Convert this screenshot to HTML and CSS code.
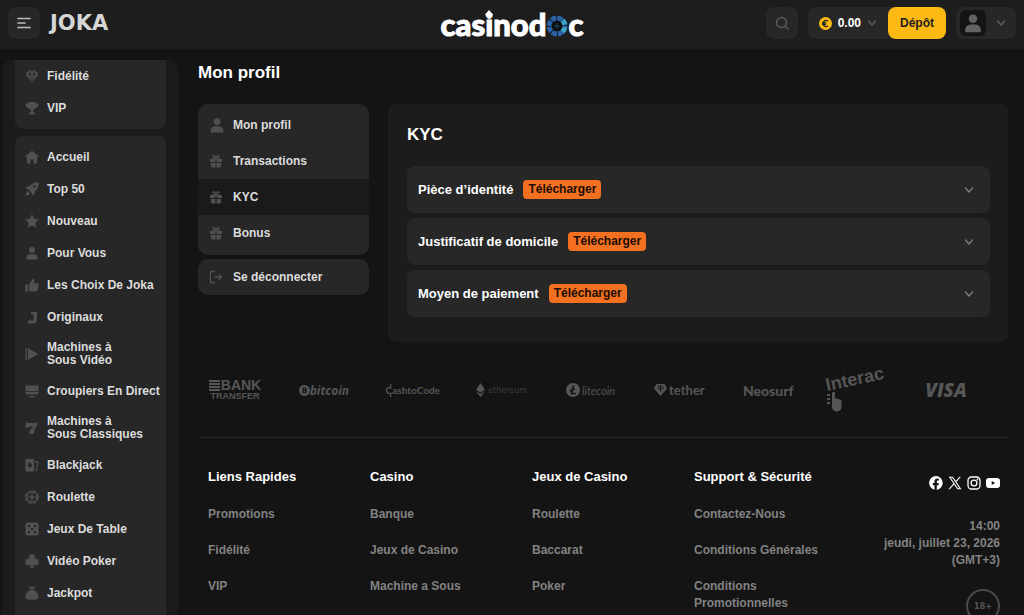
FILE: index.html
```html
<!DOCTYPE html>
<html lang="fr">

<head>
    <meta charset="UTF-8">
    <meta name="viewport" content="width=device-width, initial-scale=1.0">
    <title>Mon profil</title>
    <link rel="stylesheet" href="styles.css">
</head>

<body>
    <!-- shared icons -->
    <svg class="sprite" aria-hidden="true">
        <symbol id="i-chevron" viewBox="0 0 10 10"><path d="M1.500 3l3.500 4 3.500-4" fill="none" stroke="currentColor" stroke-width="1.400" stroke-linecap="round" stroke-linejoin="round"/></symbol>
        <symbol id="i-user" viewBox="0 0 14 14"><circle cx="7" cy="4" r="3"/><path d="M1.500 13.500v-1.500C1.500 9.500 3.500 8 5.500 8h3c2 0 4 1.500 4 4v1.500z"/></symbol>
        <symbol id="i-gift" viewBox="0 0 14 14"><path d="M1 5h5.500v3H1zM7.500 5H13v3H7.500zM2 9h4.500v4.500H3a1 1 0 0 1-1-1zM7.500 9H12v3.500a1 1 0 0 1-1 1H7.500z"/><path d="M6.800 4.800C5 4.800 3.300 4 3.800 2.500 4.300 1 6.500 1.500 6.800 4.800c.6-3.300 2.800-3.800 3.400-2.300.5 1.500-1.400 2.300-3.400 2.300z" fill="none" stroke="currentColor" stroke-width="1.200"/></symbol>
    </svg>

    <header class="header">
        <div class="header-left">
            <button class="icon-btn" aria-label="Menu">
                <svg width="16" height="16" viewBox="0 0 16 16" fill="none" stroke="#bdbdbd" stroke-width="1.700" stroke-linecap="round"><path d="M2 3.500h12M2 8h7M2 12.500h12"/></svg>
            </button>
            <a href="#" class="brand">JOKA</a>
        </div>
        <a href="#" class="casinodoc">cas<span class="dot-i">i<svg class="diamond" width="8" height="9" viewBox="0 0 8 9"><path d="M4 0l4 4.500L4 9 0 4.500z" fill="#fff"/></svg></span>nod<svg class="chip" width="22" height="22" viewBox="0 0 22 22" fill="none">
                <circle cx="11" cy="11" r="11" fill="#14181c"/>
                <circle cx="11" cy="11" r="8" stroke="#2a62a5" stroke-width="5" stroke-dasharray="5.300 .983"/>
                <path d="M16.500 5.200a8 8 0 0 1 2.300 4.300M18.900 12.300a8 8 0 0 1-2.400 4.500" stroke="#3fa3c4" stroke-width="5"/>
                <circle cx="11" cy="11" r="5" fill="#0b0f12"/>
                <path d="M11 8v6M8 11h6" stroke="#24445c" stroke-width="1"/>
            </svg>c</a>
        <div class="header-right">
            <button class="icon-btn" aria-label="Rechercher">
                <svg width="14" height="14" viewBox="0 0 14 14" fill="none" stroke="#5a5a5a" stroke-width="1.500" stroke-linecap="round"><circle cx="6.500" cy="6.500" r="5"/><path d="M10.500 10.500l2.500 2.500"/></svg>
            </button>
            <div class="wallet">
                <button class="balance">
                    <svg width="13" height="13" viewBox="0 0 13 13"><circle cx="6.500" cy="6.500" r="6.500" fill="#fcb813"/><path d="M9 4.200A3 3 0 1 0 9 8.800M3 5.800h4.200M3 7.300h4" fill="none" stroke="#222" stroke-width="1.300"/></svg>
                    0.00
                    <svg class="chevron" width="10" height="10"><use href="#i-chevron"/></svg>
                </button>
                <button class="deposit">Dépôt</button>
            </div>
            <button class="account" aria-label="Mon compte">
                <span class="avatar"><svg width="20" height="20"><use href="#i-user"/></svg></span>
                <svg class="chevron" width="10" height="10"><use href="#i-chevron"/></svg>
            </button>
        </div>
    </header>

    <div class="layout">
        <nav class="sidebar">
            <div class="side-card side-card-top">
                <a href="#"><svg viewBox="0 0 14 14"><path d="M3.300 1.500h7.400L13.800 5.300 7 13.500.2 5.300z"/><path d="M.5 5.300h13M3.500 2l1.200 3.300L7 13l2.300-7.700L10.500 2M4.700 5.300L7 1.500l2.300 3.800" fill="none" stroke="#272727" stroke-width=".7"/></svg>Fidélité</a>
                <a href="#"><svg viewBox="0 0 14 14"><path d="M3.500 1h7v1.500H13.500c0 3-1.300 4.500-3.500 5L8 9.300v2h2V13.500H4v-2.200h2v-2L4 7.500C1.800 7 .5 5.500.5 2.500h3z"/></svg>VIP</a>
            </div>
            <div class="side-card side-card-main">
                <a href="#"><svg viewBox="0 0 14 14"><path d="M7 .8l6.600 5.500-.7 1-.9-.6v6.800H8.500V9.500h-3v4H2V6.700l-.9.600-.7-1z"/></svg>Accueil</a>
                <a href="#"><svg viewBox="0 0 14 14"><path fill-rule="evenodd" d="M13.600.4c.4 4-1 6.700-3.300 8.400l-.5 2.700-2.500 2-.9-2.800-3.100-3.100L.5 6.700l2-2.500 2.700-.5C7 1.400 9.600 0 13.600.4zM9.500 3.300a1.200 1.200 0 1 0 .01 0z"/><path d="M2.600 9l2.400 2.400-1.400 1.500-2.800.4.400-2.800z"/></svg>Top 50</a>
                <a href="#"><svg viewBox="0 0 14 14"><path d="M7 0l2.100 4.700 4.900.6-3.600 3.500.9 5L7 11.400l-4.300 2.400.9-5L0 5.300l4.900-.6z"/></svg>Nouveau</a>
                <a href="#"><svg viewBox="0 0 14 14"><use href="#i-user"/></svg>Pour Vous</a>
                <a href="#"><svg viewBox="0 0 14 14"><path d="M.3 6.500H3v7H.3zM4 6.500L7.800.8c1.300-.3 2 .5 1.700 1.700L8.800 5.300h4.400c.7.500.8 1.200.6 2l-1.300 5c-.3.800-.8 1.200-1.700 1.200H5.500L4 12.800z"/></svg>Les Choix De Joka</a>
                <a href="#"><svg viewBox="0 0 14 14"><path d="M6 2h6v7.500c0 2.500-1.300 4-4 4H3v-3h4c1 0 1.500-.5 1.500-1.500V4.500H6z"/></svg>Originaux</a>
                <a href="#"><svg viewBox="0 0 14 14"><path d="M.5 1h1.300v12H.5zM3 1l10 6-10 6z"/></svg>Machines à<br>Sous Vidéo</a>
                <a href="#"><svg viewBox="0 0 14 14"><path d="M.5 1.500h13v5.700H.5zM.5 8h13v2.500H.5zM4 12h6v1.300H4z"/></svg>Croupiers En Direct</a>
                <a href="#"><svg viewBox="0 0 14 14"><path d="M.8 1.300l2 .6c2 .7 3.400-.8 5.200 0 1.600.5 2.600.2 4.500-.9v3C10.300 6.500 9 9.300 8.700 13H4.300C4.600 9.900 6 7.600 8 5.500 6 5.800 4 5 3 6.600l-2.200.6z"/></svg>Machines à<br>Sous Classiques</a>
                <a href="#"><svg viewBox="0 0 14 14"><path fill-rule="evenodd" d="M1.500 1H8a1 1 0 0 1 1 1v10.500a1 1 0 0 1-1 1H1.500a1 1 0 0 1-1-1V2a1 1 0 0 1 1-1zM4.800 4C4 5.200 2.600 6 2.600 7.500c0 1 .8 1.500 1.700 1l-.3 1.300h1.600l-.3-1.300c.9.500 1.700 0 1.700-1C7 6 5.600 5.200 4.800 4z"/><path d="M10 2.500l2.800.9c.6.200.9.700.8 1.200L12 12.300c-.1.600-.5.900-1 .8l-1-.2v-1.600l1-.1 1.300-6.100L10 4.500z"/></svg>Blackjack</a>
                <a href="#"><svg viewBox="0 0 14 14"><circle cx="7" cy="7" r="6" fill="none" stroke="currentColor" stroke-width="1.700" stroke-dasharray="3.700 1"/><circle cx="7" cy="7" r="4.700" fill="none" stroke="currentColor" stroke-width=".8"/><circle cx="7" cy="7" r="1.800"/><path d="M7 3v8M3 7h8" stroke="currentColor" stroke-width="1"/></svg>Roulette</a>
                <a href="#"><svg viewBox="0 0 14 14"><rect x=".5" y=".5" width="13" height="13" rx="2.500"/><g fill="#272727"><circle cx="4" cy="4" r="1.200"/><circle cx="10" cy="4" r="1.200"/><circle cx="7" cy="7" r="1.200"/><circle cx="4" cy="10" r="1.200"/><circle cx="10" cy="10" r="1.200"/></g></svg>Jeux De Table</a>
                <a href="#"><svg viewBox="0 0 14 14"><circle cx="7" cy="3.500" r="3.200"/><circle cx="3.500" cy="8" r="3.200"/><circle cx="10.500" cy="8" r="3.200"/><path d="M6 5h2v5l1.300 3.700H4.700L6 10z"/></svg>Vidéo Poker</a>
                <a href="#"><svg viewBox="0 0 14 14"><path d="M4 .8h6L9 3H5zM5 4h4c3 2 4.700 4.500 4.700 6.500 0 2-1.500 3.200-3.700 3.200H4c-2.200 0-3.700-1.200-3.700-3.200C.3 8.500 2 6 5 4z"/></svg>Jackpot</a>
            </div>
        </nav>

        <main class="main">
            <h1>Mon profil</h1>
            <div class="profile">
                <div class="profile-nav">
                    <nav class="menu-card">
                        <a href="#"><svg class="menu-user" viewBox="0 0 14 14"><use href="#i-user"/></svg>Mon profil</a>
                        <a href="#"><svg viewBox="0 0 14 14"><use href="#i-gift"/></svg>Transactions</a>
                        <a href="#" class="active"><svg viewBox="0 0 14 14"><use href="#i-gift"/></svg>KYC</a>
                        <a href="#"><svg viewBox="0 0 14 14"><use href="#i-gift"/></svg>Bonus</a>
                    </nav>
                    <button class="logout">
                        <svg viewBox="0 0 14 14"><path d="M6 1.500H1.500v11H6M5 7h7.500M9.800 4.300L12.500 7 9.800 9.700" fill="none" stroke="currentColor" stroke-width="1.300"/></svg>
                        Se déconnecter
                    </button>
                </div>

                <section class="panel">
                    <h2>KYC</h2>
                    <div class="doc-row">
                        <span>Pièce d’identité</span>
                        <button class="upload">Télécharger</button>
                        <button class="toggle" aria-label="Ouvrir Pièce d’identité"><svg width="10" height="10"><use href="#i-chevron"/></svg></button>
                    </div>
                    <div class="doc-row">
                        <span>Justificatif de domicile</span>
                        <button class="upload">Télécharger</button>
                        <button class="toggle" aria-label="Ouvrir Justificatif de domicile"><svg width="10" height="10"><use href="#i-chevron"/></svg></button>
                    </div>
                    <div class="doc-row">
                        <span>Moyen de paiement</span>
                        <button class="upload">Télécharger</button>
                        <button class="toggle" aria-label="Ouvrir Moyen de paiement"><svg width="10" height="10"><use href="#i-chevron"/></svg></button>
                    </div>
                </section>
            </div>

            <div class="payments">
                <div class="pay bank">
                    <span class="bank-top"><svg width="11" height="11" viewBox="0 0 11 11"><path d="M0 0h11v2H0zM0 3h11v2H0zM0 6h11v2H0zM0 9h11v2H0z"/></svg>BANK</span>
                    <span class="bank-bottom">TRANSFER</span>
                </div>
                <div class="pay bitcoin"><svg width="11" height="11" viewBox="0 0 11 11"><path fill-rule="evenodd" d="M5.500 0a5.500 5.500 0 1 0 .01 0zM3.800 2.500h2.400c1.800 0 2 2 .9 2.700C8.500 6 8 8.300 6 8.300H3.300zM5 3.600l-.2 1.200h1c.9 0 1-1.200.2-1.200zM4.700 6l-.2 1.200h1.200c1 0 1-1.200.1-1.200z"/></svg>bitcoin</div>
                <div class="pay cashto">CashtoCode<svg class="cash-bar" width="3" height="13" viewBox="0 0 3 13"><path d="M1 0h1.200v3H1zM1 10h1.200v3H1z"/></svg></div>
                <div class="pay ethereum"><svg width="9" height="14" viewBox="0 0 9 14"><path d="M4.500 0L9 7 4.500 9.500 0 7zM0 8.200l4.500 2.500L9 8.200 4.500 14z"/></svg>ethereum</div>
                <div class="pay litecoin"><svg width="14" height="14" viewBox="0 0 14 14"><circle cx="7" cy="7" r="7"/><path d="M7.600 2.500L5.500 10.500h4.500M3.800 8l5-2" fill="none" stroke="#141414" stroke-width="1.600"/></svg>litecoin</div>
                <div class="pay tether"><svg width="13" height="12" viewBox="0 0 13 12"><path d="M2.500 0h8L13 4.500 6.500 12 0 4.500z"/><path d="M3.500 2h6M6.500 2v6M3.500 4.500c0 1 6 1 6 0s-6-1-6 0z" fill="none" stroke="#141414" stroke-width=".8"/></svg>tether</div>
                <div class="pay neosurf">Neosurf</div>
                <div class="pay interac">
                    <svg width="62" height="48" viewBox="0 0 62 48">
                        <text x="1" y="25" transform="rotate(-12 1 25)">Interac</text>
                        <path d="M1 28h3v2H1zM1 32h3v2H1zM1 36h3v2H1z"/>
                        <path d="M6 27c0-1.300 3-1.300 3 0v5l5 1.500c1 .4 1.500 1 1.500 2V41c0 2.500-2 4.500-4.500 4.500S6 43.500 6 41z"/>
                    </svg>
                </div>
                <div class="pay visa">VISA</div>
            </div>

            <footer class="footer">
                <div class="footer-col">
                    <h3>Liens Rapides</h3>
                    <a href="#">Promotions</a>
                    <a href="#">Fidélité</a>
                    <a href="#">VIP</a>
                </div>
                <div class="footer-col">
                    <h3>Casino</h3>
                    <a href="#">Banque</a>
                    <a href="#">Jeux de Casino</a>
                    <a href="#">Machine a Sous</a>
                </div>
                <div class="footer-col">
                    <h3>Jeux de Casino</h3>
                    <a href="#">Roulette</a>
                    <a href="#">Baccarat</a>
                    <a href="#">Poker</a>
                </div>
                <div class="footer-col">
                    <h3>Support &amp; Sécurité</h3>
                    <a href="#">Contactez-Nous</a>
                    <a href="#">Conditions Générales</a>
                    <a href="#">Conditions Promotionnelles</a>
                </div>
                <div class="footer-info">
                    <div class="social">
                        <a href="#" aria-label="Facebook"><svg width="14" height="14" viewBox="0 0 14 14"><path d="M7 0a7 7 0 0 0-1.500 13.800V9.200H3.800V7h1.700V5.500c0-2 1.100-3 2.900-3l1.500.2v1.800h-.9c-.9 0-1.200.5-1.200 1.200V7h2l-.4 2.200H7.800v4.700A7 7 0 0 0 7 0z"/></svg></a>
                        <a href="#" aria-label="X"><svg width="14" height="14" viewBox="0 0 14 14"><path fill-rule="evenodd" d="M.8.8h4l3 4.200L11.500.8h1.400L8.400 5.900l5 7.300h-4L6 8.500l-4.200 4.700H.4l5-5.700zM2.700 1.800l7.200 10.400h1.500L4.300 1.800z"/></svg></a>
                        <a href="#" aria-label="Instagram"><svg width="14" height="14" viewBox="0 0 14 14"><rect x="1" y="1" width="12" height="12" rx="3.500" fill="none" stroke="#fff" stroke-width="1.300"/><circle cx="7" cy="7" r="2.900" fill="none" stroke="#fff" stroke-width="1.300"/><circle cx="10.500" cy="3.500" r=".9"/></svg></a>
                        <a href="#" aria-label="YouTube"><svg width="14" height="14" viewBox="0 0 14 14"><path fill-rule="evenodd" d="M3 2h8c2 0 3 1 3 3v4c0 2-1 3-3 3H3c-2 0-3-1-3-3V5c0-2 1-3 3-3zM5.700 4.900v4.200L9.200 7z"/></svg></a>
                    </div>
                    <p>14:00<br>jeudi, juillet 23, 2026<br>(GMT+3)</p>
                    <span class="age">18+</span>
                </div>
            </footer>
        </main>
    </div>
</body>

</html>
```
FILE: styles.css
```css
* {
    box-sizing: border-box;
}

body {
    margin: 0;
    height: 100vh;
    display: flex;
    flex-direction: column;
    overflow: hidden;
    background-color: #141414;
    color: #dcdcdc;
    font-family: "Liberation Sans", Arial, sans-serif;
    font-size: 12px;
    font-weight: bold;
}

a {
    color: inherit;
    text-decoration: none;
}

button {
    border: none;
    padding: 0;
    font: inherit;
    color: inherit;
    background: none;
    cursor: pointer;
}

h1,
h2,
h3,
p {
    margin: 0;
}

svg {
    flex: none;
}

svg:not([fill]) {
    fill: currentColor;
}

.sprite {
    display: none;
}

/* header */
.header {
    flex: none;
    display: grid;
    grid-template-columns: 1fr auto 1fr;
    align-items: center;
    padding: 7px 8px 10px;
    background-color: #1d1d1d;
}

.header-left,
.header-right {
    display: flex;
    align-items: center;
    gap: 10px;
}

.header-right {
    justify-content: flex-end;
}

.icon-btn {
    display: flex;
    align-items: center;
    justify-content: center;
    width: 32px;
    height: 32px;
    border-radius: 8px;
    background-color: #272727;
}

.brand {
    font-family: "DejaVu Sans", sans-serif;
    font-size: 21px;
    line-height: 32px;
    color: #d6d6d6;
}

.casinodoc {
    display: flex;
    align-items: center;
    padding-top: 2px;
    font-family: Lato, sans-serif;
    font-size: 31px;
    font-weight: 900;
    line-height: 30px;
    color: #fff;
    -webkit-text-stroke: 1px #fff;
}

.dot-i {
    position: relative;
}

.diamond {
    position: absolute;
    top: 1px;
    left: 0;
}

.chip {
    margin-top: 4px;
}

.wallet {
    display: flex;
    border-radius: 8px;
    background-color: #272727;
}

.balance {
    display: flex;
    align-items: center;
    gap: 6px;
    padding: 0 11px;
    color: #fff;
}

.chevron {
    color: #5f5f5f;
}

.deposit {
    height: 32px;
    padding: 0 12px;
    border-radius: 8px;
    background-color: #fcb813;
    color: #1d1d1d;
}

.account {
    display: flex;
    align-items: center;
    gap: 10px;
    height: 32px;
    padding: 0 10px 0 4px;
    border-radius: 8px;
    background-color: #272727;
}

.avatar {
    display: flex;
    align-items: center;
    justify-content: center;
    width: 26px;
    height: 26px;
    border-radius: 6px;
    background-color: #141414;
    color: #626262;
}

/* page */
.layout {
    flex: 1;
    min-height: 0;
    display: flex;
    gap: 20px;
    padding: 11px 16px 0 2px;
}

.sidebar {
    flex: none;
    width: 176px;
    padding: 0 12px 0 13px;
    border-radius: 10px 10px 0 0;
    background-color: #1b1b1b;
    overflow: hidden;
}

.side-card {
    padding: 5px 0 5px 10px;
    margin-bottom: 7px;
    border-radius: 8px;
    background-color: #272727;
}

.side-card-top {
    padding-top: 0;
    border-radius: 0 0 8px 8px;
}

.side-card-main {
    padding-bottom: 20px;
}

.side-card a {
    display: flex;
    align-items: center;
    gap: 8px;
    min-height: 32px;
    padding: 8px 0;
    line-height: 13px;
}

.side-card svg {
    width: 14px;
    height: 14px;
    color: #505050;
}

.main {
    flex: 1;
    min-width: 0;
    overflow: hidden;
}

h1 {
    margin-bottom: 18px;
    font-size: 17px;
    line-height: 26px;
    color: #fff;
}

.profile {
    display: grid;
    grid-template-columns: 171px 1fr;
    gap: 19px;
}

.menu-card {
    padding: 3px 0 4px;
    margin-bottom: 4px;
    border-radius: 10px;
    background-color: #272727;
}

.menu-card a,
.logout {
    display: flex;
    align-items: center;
    gap: 10px;
    height: 36px;
    padding: 0 11px;
}

.menu-card svg,
.logout svg {
    width: 14px;
    height: 14px;
    color: #505050;
}

.menu-card .menu-user {
    width: 16px;
    height: 16px;
    margin-right: -2px;
}

.menu-card .active {
    background-color: #1a1a1a;
}

.logout {
    width: 100%;
    border-radius: 10px;
    background-color: #272727;
}

.panel {
    display: flex;
    flex-direction: column;
    gap: 5px;
    padding: 20px 18px 25px 19px;
    border-radius: 8px;
    background-color: #1c1c1c;
}

.panel h2 {
    margin-bottom: 15px;
    font-size: 17px;
    line-height: 22px;
    color: #fff;
}

.doc-row {
    display: flex;
    align-items: center;
    gap: 10px;
    height: 47px;
    padding: 0 16px 0 11px;
    border-radius: 8px;
    background-color: #272727;
    color: #fff;
    font-size: 13px;
}

.upload {
    padding: 0 5px;
    border-radius: 4px;
    background-color: #f37021;
    color: #1a0d05;
    font-size: 12px;
    line-height: 19px;
}

.toggle {
    margin-left: auto;
    color: #7d7d7d;
}

.toggle svg {
    display: block;
}

/* payment logos */
.payments {
    display: flex;
    justify-content: space-between;
    height: 48px;
    margin: 24px 0 23px;
    padding: 0 36px 0 11px;
    color: #565656;
}

.pay {
    display: flex;
    align-items: center;
    justify-content: center;
    width: 52px;
    white-space: nowrap;
}

.bank {
    flex-direction: column;
}

.bank-top {
    display: flex;
    align-items: center;
    gap: 1px;
    font-size: 14px;
    line-height: 11px;
}

.bank-bottom {
    font-size: 9px;
    line-height: 10px;
}

.bitcoin {
    font-family: "Noto Sans", sans-serif;
    font-size: 12px;
    font-style: italic;
}

.cashto {
    position: relative;
    font-family: Lato, sans-serif;
    font-size: 10px;
}

.cash-bar {
    position: absolute;
    top: 18px;
    left: 2px;
}

.ethereum {
    gap: 3px;
    font-family: "DejaVu Sans", sans-serif;
    font-size: 8px;
    font-weight: normal;
    color: #3c3c3c;
}

.ethereum svg {
    color: #565656;
}

.litecoin {
    gap: 2px;
    font-family: Lato, sans-serif;
    font-size: 11px;
    font-style: italic;
    font-weight: normal;
}

.tether {
    gap: 2px;
    font-family: Lato, sans-serif;
    font-size: 13px;
}

.neosurf {
    font-family: Lato, sans-serif;
    font-size: 14px;
    font-weight: 900;
}

.interac {
    width: 62px;
    margin: 0 -5px;
    font-size: 18px;
}

.interac svg {
    overflow: visible;
}

.visa {
    font-family: "Open Sans", sans-serif;
    font-size: 19px;
    font-style: italic;
    font-weight: 800;
}

/* footer */
.footer {
    display: grid;
    grid-template-columns: repeat(5, 1fr);
    padding-top: 30px;
    border-top: 1px solid #262626;
    line-height: 17px;
    color: #828282;
}

.footer-col {
    display: flex;
    flex-direction: column;
    gap: 19px;
    padding: 0 8px 0 10px;
}

.footer-col h3 {
    margin-bottom: 2px;
    font-size: 13px;
    color: #fff;
}

.footer-info {
    display: flex;
    flex-direction: column;
    align-items: flex-end;
    padding: 8px 8px 0;
    text-align: right;
}

.social {
    display: flex;
    gap: 5px;
    margin-bottom: 28px;
    color: #fff;
}

.social svg {
    display: block;
}

.age {
    display: flex;
    align-items: center;
    justify-content: center;
    width: 34px;
    height: 34px;
    margin-top: 20px;
    border: 2px solid #4a4a4a;
    border-radius: 50%;
    font-family: "DejaVu Sans", sans-serif;
    font-size: 8px;
    color: #565656;
}
```
